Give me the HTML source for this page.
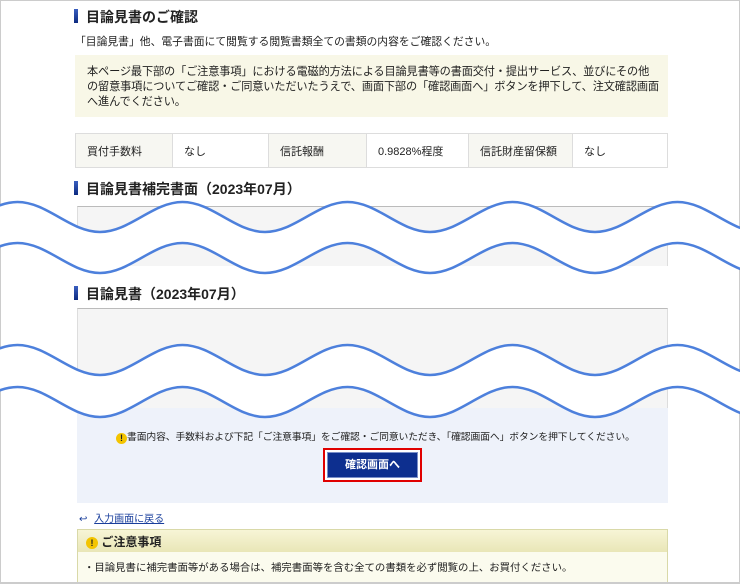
<!DOCTYPE html>
<html><head><meta charset="utf-8"><style>
*{margin:0;padding:0;box-sizing:border-box}
html,body{width:740px;height:585px;overflow:hidden}
body{background:#fff;position:relative;font-family:"Liberation Sans","Noto Sans CJK JP",sans-serif;color:#222;font-size:11.5px}
.a{position:absolute}
.h{font-size:14px;font-weight:bold;color:#222;white-space:nowrap}
.bar{position:absolute;width:4px;height:14px;background:linear-gradient(#3a5fc0,#0c2a80);}
.t{white-space:nowrap}
table{border-collapse:collapse;position:absolute;left:75px;top:133px;width:593px;height:35px;font-size:11px}
td{border:1px solid #ddd;padding-left:11px}
td.l{background:#f7f7f2}
</style></head><body>
<div class="a" style="left:0;top:0;width:740px;height:1px;background:#ccc"></div>
<div class="a" style="left:0;top:0;width:1px;height:585px;background:#ccc"></div>
<div class="a" style="right:0;top:0;width:1px;height:585px;background:#ccc"></div>

<div class="bar" style="left:74px;top:9px"></div>
<div class="a h" style="left:86px;top:7px">目論見書のご確認</div>
<div class="a t" style="left:75px;top:33px;font-size:10.8px">「目論見書」他、電子書面にて閲覧する閲覧書類全ての書類の内容をご確認ください。</div>
<div class="a" style="left:75px;top:55px;width:593px;height:62px;background:#f8f7e7;padding:10px 12px;line-height:15px;white-space:nowrap;font-size:11.2px;letter-spacing:-0.15px">本ページ最下部の「ご注意事項」における電磁的方法による目論見書等の書面交付・提出サービス、並びにその他<br>の留意事項についてご確認・ご同意いただいたうえで、画面下部の「確認画面へ」ボタンを押下して、注文確認画面<br>へ進んでください。</div>
<table><tr><td class="l" style="width:97px">買付手数料</td><td style="width:96px">なし</td><td class="l" style="width:98px">信託報酬</td><td style="width:102px">0.9828%程度</td><td class="l" style="width:104px">信託財産留保額</td><td>なし</td></tr></table>

<div class="bar" style="left:74px;top:181px"></div>
<div class="a h" style="left:86px;top:179px">目論見書補完書面（2023年07月）</div>
<div class="a" style="left:77px;top:206px;width:591px;height:60px;background:#f5f5f5;border-top:1px solid #bbb;border-left:1px solid #ddd;border-right:1px solid #ddd"></div>

<div class="bar" style="left:74px;top:286px"></div>
<div class="a h" style="left:86px;top:284px">目論見書（2023年07月）</div>
<div class="a" style="left:77px;top:308px;width:591px;height:100px;background:#f5f5f5;border-top:1px solid #bbb;border-left:1px solid #ddd;border-right:1px solid #ddd"></div>

<div class="a" style="left:77px;top:408px;width:591px;height:95px;background:#eef2fa"></div>
<div class="a t" style="left:116px;top:429px;font-size:9.8px;letter-spacing:-0.1px"><span style="display:inline-block;width:11px;height:11px;border-radius:50%;background:#f3c400;color:#222;font-size:9px;font-weight:bold;text-align:center;line-height:11px;vertical-align:-1px;letter-spacing:0">!</span>書面内容、手数料および下記「ご注意事項」をご確認・ご同意いただき、「確認画面へ」ボタンを押下してください。</div>
<div class="a" style="left:323px;top:448px;width:99px;height:34px;border:2px solid #e00000;background:#fff"></div>
<div class="a" style="left:327px;top:452px;width:91px;height:26px;background:#0d2f8f;border:1px solid #7a8fc8;color:#fff;font-weight:bold;font-size:11px;text-align:center;line-height:24px">確認画面へ</div>

<div class="a t" style="left:79px;top:510px;font-size:10px;color:#1a3f9c">↩︎ <span style="margin-left:4px;text-decoration:underline">入力画面に戻る</span></div>
<div class="a" style="left:77px;top:529px;width:591px;height:53px;border:1px solid #d9d9a8;border-bottom:none;background:#fbfbee"></div>
<div class="a" style="left:78px;top:530px;width:589px;height:22px;background:linear-gradient(#f7f5d6,#e9e6b7)"></div>
<div class="a t" style="left:86px;top:533px;font-size:12px;font-weight:bold"><span style="display:inline-block;width:12px;height:12px;border-radius:50%;background:#f3c400;font-size:9px;text-align:center;line-height:12px;vertical-align:0">!</span> ご注意事項</div>
<div class="a t" style="left:84px;top:559px;font-size:10.4px">・目論見書に補完書面等がある場合は、補完書面等を含む全ての書類を必ず閲覧の上、お買付ください。</div>
<div class="a" style="left:0;top:582px;width:740px;height:3px;background:#fff;border-top:2px solid #ccc"></div>

<svg class="a" style="left:0;top:0" width="740" height="585">
<g>
<path fill="#fff" d="M-65,232 c29.7,0 52.8,-30 82.5,-30 s52.8,30 82.5,30 s52.8,-30 82.5,-30 s52.8,30 82.5,30 s52.8,-30 82.5,-30 s52.8,30 82.5,30 s52.8,-30 82.5,-30 s52.8,30 82.5,30 s52.8,-30 82.5,-30 s52.8,30 82.5,30 L760,273 c-29.7,0 -52.8,-30 -82.5,-30 s-52.8,30 -82.5,30 s-52.8,-30 -82.5,-30 s-52.8,30 -82.5,30 s-52.8,-30 -82.5,-30 s-52.8,30 -82.5,30 s-52.8,-30 -82.5,-30 s-52.8,30 -82.5,30 s-52.8,-30 -82.5,-30 s-52.8,30 -82.5,30 Z"/>
<path fill="#fff" d="M-65,375 c29.7,0 52.8,-30 82.5,-30 s52.8,30 82.5,30 s52.8,-30 82.5,-30 s52.8,30 82.5,30 s52.8,-30 82.5,-30 s52.8,30 82.5,30 s52.8,-30 82.5,-30 s52.8,30 82.5,30 s52.8,-30 82.5,-30 s52.8,30 82.5,30 L760,417 c-29.7,0 -52.8,-30 -82.5,-30 s-52.8,30 -82.5,30 s-52.8,-30 -82.5,-30 s-52.8,30 -82.5,30 s-52.8,-30 -82.5,-30 s-52.8,30 -82.5,30 s-52.8,-30 -82.5,-30 s-52.8,30 -82.5,30 s-52.8,-30 -82.5,-30 s-52.8,30 -82.5,30 Z"/>
<g fill="none" stroke="#4d80dc" stroke-width="2.5">
<path d="M-65,232 c29.7,0 52.8,-30 82.5,-30 s52.8,30 82.5,30 s52.8,-30 82.5,-30 s52.8,30 82.5,30 s52.8,-30 82.5,-30 s52.8,30 82.5,30 s52.8,-30 82.5,-30 s52.8,30 82.5,30 s52.8,-30 82.5,-30 s52.8,30 82.5,30"/>
<path d="M-65,273 c29.7,0 52.8,-30 82.5,-30 s52.8,30 82.5,30 s52.8,-30 82.5,-30 s52.8,30 82.5,30 s52.8,-30 82.5,-30 s52.8,30 82.5,30 s52.8,-30 82.5,-30 s52.8,30 82.5,30 s52.8,-30 82.5,-30 s52.8,30 82.5,30"/>
<path d="M-65,375 c29.7,0 52.8,-30 82.5,-30 s52.8,30 82.5,30 s52.8,-30 82.5,-30 s52.8,30 82.5,30 s52.8,-30 82.5,-30 s52.8,30 82.5,30 s52.8,-30 82.5,-30 s52.8,30 82.5,30 s52.8,-30 82.5,-30 s52.8,30 82.5,30"/>
<path d="M-65,417 c29.7,0 52.8,-30 82.5,-30 s52.8,30 82.5,30 s52.8,-30 82.5,-30 s52.8,30 82.5,30 s52.8,-30 82.5,-30 s52.8,30 82.5,30 s52.8,-30 82.5,-30 s52.8,30 82.5,30 s52.8,-30 82.5,-30 s52.8,30 82.5,30"/>
</g></g>
</svg>
</body></html>
